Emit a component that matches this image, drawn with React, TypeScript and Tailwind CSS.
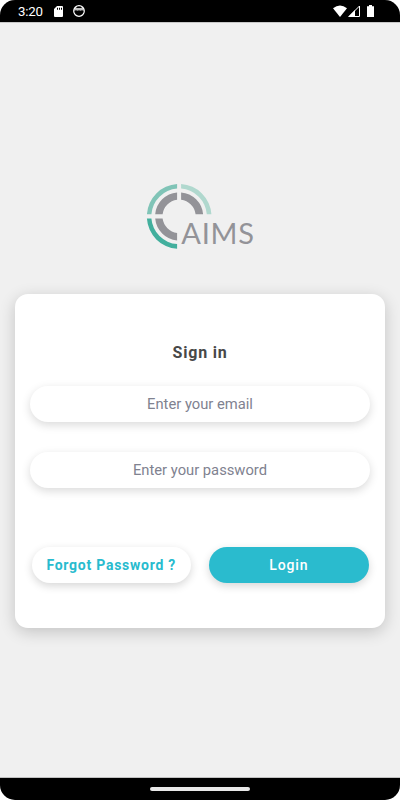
import type { ReactNode } from "react";

function StatusBar() {
  return (
    <header className="flex h-[22px] shrink-0 items-center justify-between bg-black pr-[26px] pl-[18px] text-white">
      <div className="flex items-center">
        <span className="w-[36px] pt-[2px] text-[13.3px] leading-[20px] tracking-[-0.2px]">
          3:20
        </span>
        <svg className="h-[11px] w-[9px]" viewBox="0 0 9 11" fill="currentColor">
          <path
            fillRule="evenodd"
            d="M3 0h5a1 1 0 0 1 1 1v9a1 1 0 0 1-1 1H1a1 1 0 0 1-1-1V3zM3 1.7v2h1v-2zM5 1.7v2h1v-2zM7 1.7v2h1v-2z"
          />
        </svg>
        <svg className="ml-[10px] size-3" viewBox="0 0 12 12">
          <circle cx="6" cy="6" r="5.3" fill="none" stroke="#fff" strokeWidth="1.2" />
          <path
            d="M2 1.8l2 1.3h4l2-1.3 1 4-2-.5-1.5.5L6 5.2l-1.5.6L3 5.3l-2 .5z"
            fill="#fff"
            fillOpacity=".75"
          />
        </svg>
      </div>
      <div className="flex items-center">
        <svg className="h-3 w-[14px]" viewBox="0 0 14 12" fill="currentColor">
          <path d="M7 12L0 3.2Q7-2.2 14 3.2z" />
        </svg>
        <svg className="ml-[1px] size-3" viewBox="0 0 12 12">
          <path d="M11.5 1V11.5H1z" fill="none" stroke="#fff" />
          <path d="M0 12L7 5V12z" fill="#fff" />
        </svg>
        <svg className="ml-[7px] h-3 w-[7px]" viewBox="0 0 7 12" fill="currentColor">
          <path d="M2 0h3v1.3h2V12H0V1.3h2z" />
        </svg>
      </div>
    </header>
  );
}

function Logo() {
  return (
    <svg
      className="mt-[157px] ml-[143px] h-[73px] w-[114px] shrink-0"
      viewBox="143 180 114 73"
      role="img"
      aria-label="AIMS"
    >
      <path
        d="M146.9 214.2A32.4 32.4 0 0 1 177.1 184V188.6A27.8 27.8 0 0 0 151.4 214.2z"
        fill="#80c4b7"
      />
      <path
        d="M181.1 184A32.4 32.4 0 0 1 211.4 214.2H206.8A27.8 27.8 0 0 0 181.1 188.6z"
        fill="#b0d8ce"
      />
      <path
        d="M146.9 218.6A32.4 32.4 0 0 0 177.1 248.8V244.1A27.8 27.8 0 0 1 151.4 218.6z"
        fill="#42af9d"
      />
      <g fill="#939398">
        <path d="M155.2 214.2A24 24 0 0 1 177.1 192.4V199.7A16.8 16.8 0 0 0 162.6 214.2z" />
        <path d="M181.1 192.4A24 24 0 0 1 203.1 214.2H195.6A16.8 16.8 0 0 0 181.1 199.7z" />
        <path d="M155.2 218.6A24 24 0 0 0 177.1 240.4V232.9A16.8 16.8 0 0 1 162.6 218.6z" />
        <text
          x="181.3"
          y="244.2"
          fontFamily="Lato, sans-serif"
          fontSize="29"
          textLength="72.6"
        >
          AIMS
        </text>
      </g>
    </svg>
  );
}

function Field({ type, placeholder }: { type: string; placeholder: string }) {
  return (
    <input
      type={type}
      placeholder={placeholder}
      className="block h-9 w-full rounded-full bg-white text-center text-[14.75px] text-[#45464f] shadow-[0_3px_10px_rgba(0,0,0,0.15)] outline-none placeholder:text-[#808290]"
    />
  );
}

function Button({ className, children }: { className: string; children: ReactNode }) {
  return (
    <button
      type="button"
      className={`h-[36.5px] w-[159.5px] rounded-full pb-px text-sm shadow-[0_3px_9px_rgba(0,0,0,0.16)] ${className}`}
    >
      {children}
    </button>
  );
}

export default function App() {
  return (
    <div className="h-[800px] w-[400px] bg-white">
      <div className="flex h-full flex-col overflow-hidden rounded-[15px] bg-[#f0f0f0] font-[Roboto,sans-serif]">
        <StatusBar />
        <main className="flex flex-1 flex-col border-y border-t-[#c8c8c8] border-b-[#c0c0c0]">
          <Logo />
          <form className="mx-[15px] mt-[41px] h-[334px] rounded-[13px] bg-white px-[15px] shadow-[0_4px_16px_rgba(0,0,0,0.19)]">
            <h1 className="pt-[47px] text-center text-base leading-6 font-bold tracking-[0.8px] text-[#484848]">
              Sign in
            </h1>
            <div className="mt-[21.4px] grid gap-[29.6px]">
              <Field type="email" placeholder="Enter your email" />
              <Field type="password" placeholder="Enter your password" />
            </div>
            <div className="mt-[59px] flex justify-between px-[1.5px]">
              <Button className="bg-white font-bold tracking-[0.75px] text-[#28bbce]">
                Forgot Password ?
              </Button>
              <Button className="bg-[#2abbce] font-medium tracking-[0.85px] text-white">
                Login
              </Button>
            </div>
          </form>
        </main>
        <footer className="flex h-[22px] shrink-0 justify-center bg-black pt-[9px]">
          <div className="h-1 w-[100px] rounded-full bg-[#e8e8e8]" />
        </footer>
      </div>
    </div>
  );
}
